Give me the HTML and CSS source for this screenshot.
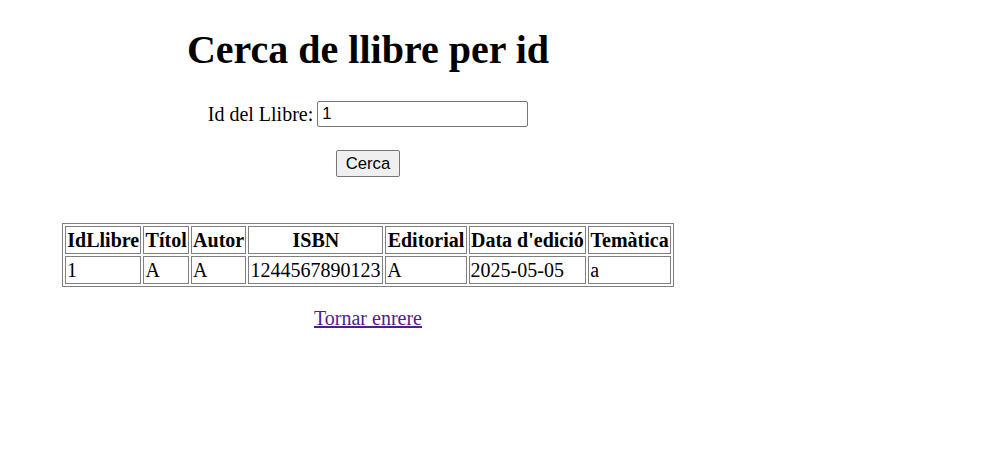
FILE: index.html
```html
<!DOCTYPE html>
<html lang="ca">
<head>
<meta charset="utf-8">
<title>Cerca de llibre per id</title>
<link rel="stylesheet" href="styles.css">
</head>
<body>
<div class="page">
  <h1 class="title">Cerca de llibre per id</h1>
  <form class="form">
    <div class="field">
      <label for="id" class="label">Id del Llibre:</label>
      <input id="id" class="input" type="text" value="1">
    </div>
    <div class="actions">
      <button type="button" class="btn">Cerca</button>
    </div>
  </form>
  <table class="results">
    <thead>
      <tr>
        <th>IdLlibre</th><th>Títol</th><th>Autor</th><th>ISBN</th><th>Editorial</th><th>Data d'edició</th><th>Temàtica</th>
      </tr>
    </thead>
    <tbody>
      <tr>
        <td>1</td><td>A</td><td>A</td><td>1244567890123</td><td>A</td><td>2025-05-05</td><td>a</td>
      </tr>
    </tbody>
  </table>
  <p class="back"><a href="#" class="link">Tornar enrere</a></p>
</div>
</body>
</html>
```
FILE: styles.css
```css
html, body {
  margin: 0;
  padding: 0;
  background: #fff;
}
body {
  font-family: "Liberation Serif", "Times New Roman", serif;
  font-size: 20px;
  color: #000;
}
.page {
  width: 736px;
  text-align: center;
  padding-top: 1px;
}
.title {
  font-size: 40px;
  font-weight: bold;
  margin: 26px 0 27px;
  line-height: 46px;
}
.form {
  margin: 0;
}
.field {
  display: flex;
  justify-content: center;
  align-items: center;
  gap: 4px;
  height: 28px;
}
.label {
  line-height: 23px;
}
.input {
  width: 211px;
  height: 26px;
  box-sizing: border-box;
  border: 1px solid #767676;
  border-radius: 2px;
  padding: 1px 4px;
  font-family: "Liberation Sans", Arial, sans-serif;
  font-size: 16.67px;
  margin: 0;
}
.actions {
  margin-top: 22px;
  display: flex;
  justify-content: center;
}
.btn {
  width: 64px;
  height: 27px;
  box-sizing: border-box;
  font-family: "Liberation Sans", Arial, sans-serif;
  font-size: 16.67px;
  background: #efefef;
  border: 1px solid #767676;
  border-radius: 2px;
  padding: 0;
  color: #000;
}
.results {
  width: 612px;
  margin: 46px auto 0;
  border: 1px solid #808080;
  border-spacing: 2px;
  text-align: left;
}
.results th,
.results td {
  border: 1px solid #808080;
  padding: 1px;
  line-height: 24px;
}
.results th {
  text-align: center;
}
.back {
  margin: 20px 0 0;
}
.link {
  color: #551a8b;
}
```
